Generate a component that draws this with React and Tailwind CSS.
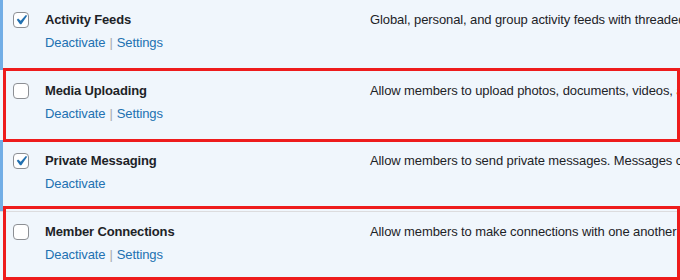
import React from "react";

const plugins = [
  {
    name: "Activity Feeds",
    desc: "Global, personal, and group activity feeds with threaded commenting, direct posting, favoriting, and @mentions.",
    active: true,
    settings: true,
    rowClass: "h-[70px] pt-[10px]",
  },
  {
    name: "Media Uploading",
    desc: "Allow members to upload photos, documents, videos, and other media files to their profiles.",
    active: false,
    settings: true,
    rowClass: "h-[70px] pt-[11px]",
  },
  {
    name: "Private Messaging",
    desc: "Allow members to send private messages. Messages can be sent to one or more members at once.",
    active: true,
    settings: false,
    rowClass: "h-[71px] pt-[11px]",
  },
  {
    name: "Member Connections",
    desc: "Allow members to make connections with one another and focus on those they care about most.",
    active: false,
    settings: true,
    rowClass: "h-[69px] pt-[10px] border-t border-[#dcdcde]",
  },
];

const Checkbox = ({ checked }) => (
  <span className="flex h-4 w-4 items-center justify-center rounded-[4px] border border-[#8c8f94] bg-white">
    {checked && (
      <svg viewBox="0 0 20 20" className="h-[20px] w-[20px] shrink-0">
        <path
          d="M14.83 4.89l1.34.94-5.81 8.38H9.02L5.78 9.67l1.34-1.25 2.57 2.4z"
          fill="#2271b1"
        />
      </svg>
    )}
  </span>
);

const PluginRow = ({ plugin }) => (
  <div className={`relative flex items-start bg-[#f0f6fc] ${plugin.rowClass}`}>
    {plugin.active && (
      <div className="absolute left-0 top-0 bottom-0 w-[3px] bg-[#72aee6]" />
    )}
    <div className="flex h-5 w-[45px] shrink-0 items-center pl-[13px]">
      <Checkbox checked={plugin.active} />
    </div>
    <div className="w-[325px] shrink-0">
      <div className="text-[13px] font-bold leading-5 tracking-[-0.15px] text-[#1d2327]">
        {plugin.name}
      </div>
      <div className="mt-[3px] text-[13px] leading-5 tracking-[-0.1px] text-[#2271b1]">
        Deactivate
        {plugin.settings && (
          <>
            <span className="mx-[4px] text-[#a7aaad]">|</span>
            Settings
          </>
        )}
      </div>
    </div>
    <div className="whitespace-nowrap text-[13px] leading-5 tracking-[-0.1px] text-[#1d2327]">
      {plugin.desc}
    </div>
  </div>
);

export default function App() {
  return (
    <div
      className="relative h-[280px] w-[680px] overflow-hidden bg-[#f0f6fc]"
      style={{ fontFamily: '"Liberation Sans", Arial, sans-serif' }}
    >
      {plugins.map((p) => (
        <PluginRow key={p.name} plugin={p} />
      ))}
      <div className="pointer-events-none absolute left-[3px] top-[68px] h-[74px] w-[677px] border-[3px] border-[#ee1c1c]" />
      <div className="pointer-events-none absolute left-[3px] top-[206px] h-[74px] w-[677px] border-[3px] border-[#ee1c1c]" />
    </div>
  );
}
